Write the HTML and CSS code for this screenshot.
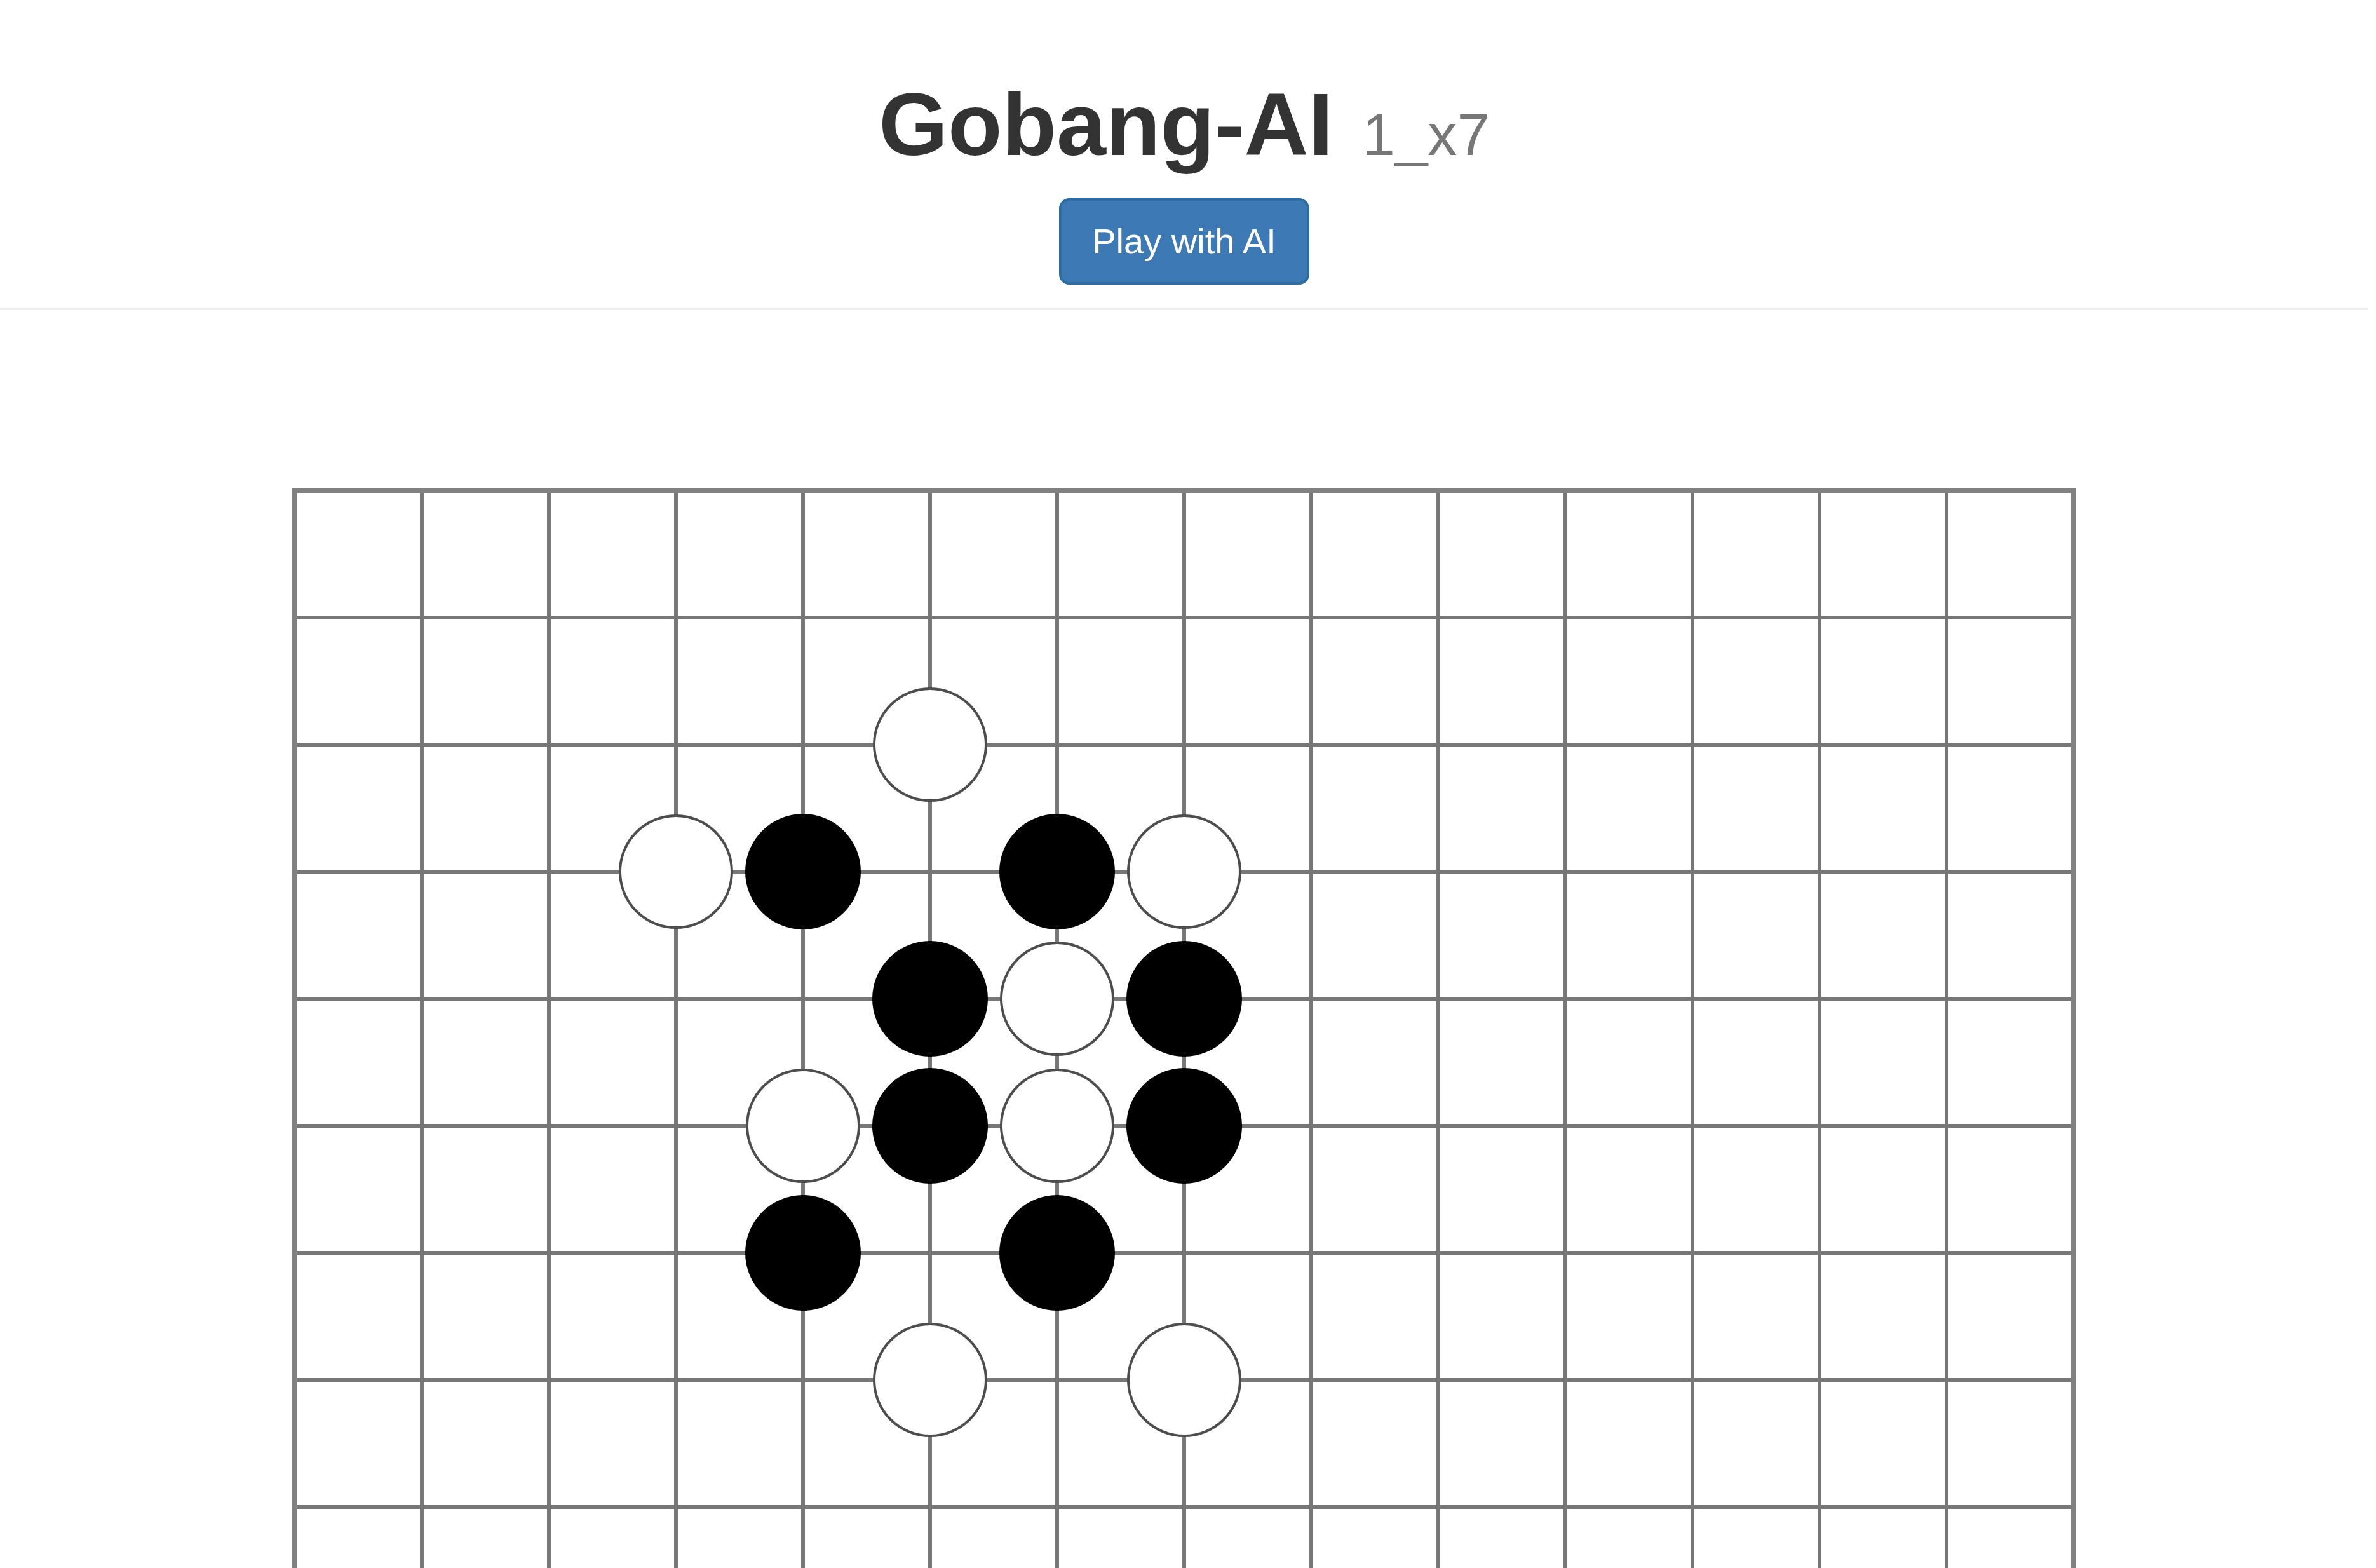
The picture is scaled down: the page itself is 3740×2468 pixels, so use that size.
FILE: index.html
```html
<!DOCTYPE html>
<html lang="en">
<head>
<meta charset="utf-8">
<title>Gobang-AI</title>
<link rel="stylesheet" href="styles.css">
</head>
<body>
<div class="page">
  <header class="page-header">
    <h1 class="title">Gobang-AI <small class="version">1_x7</small></h1>
    <button class="btn btn-primary" type="button">Play with AI</button>
  </header>
  <main class="board-wrap">
    <svg class="board" width="2808" height="2808" viewBox="-4 -4 2808 2808" xmlns="http://www.w3.org/2000/svg">
      <g class="grid">
        <line x1="200" y1="0" x2="200" y2="2800"/>
        <line x1="400" y1="0" x2="400" y2="2800"/>
        <line x1="600" y1="0" x2="600" y2="2800"/>
        <line x1="800" y1="0" x2="800" y2="2800"/>
        <line x1="1000" y1="0" x2="1000" y2="2800"/>
        <line x1="1200" y1="0" x2="1200" y2="2800"/>
        <line x1="1400" y1="0" x2="1400" y2="2800"/>
        <line x1="1600" y1="0" x2="1600" y2="2800"/>
        <line x1="1800" y1="0" x2="1800" y2="2800"/>
        <line x1="2000" y1="0" x2="2000" y2="2800"/>
        <line x1="2200" y1="0" x2="2200" y2="2800"/>
        <line x1="2400" y1="0" x2="2400" y2="2800"/>
        <line x1="2600" y1="0" x2="2600" y2="2800"/>
        <line x1="0" y1="200" x2="2800" y2="200"/>
        <line x1="0" y1="400" x2="2800" y2="400"/>
        <line x1="0" y1="600" x2="2800" y2="600"/>
        <line x1="0" y1="800" x2="2800" y2="800"/>
        <line x1="0" y1="1000" x2="2800" y2="1000"/>
        <line x1="0" y1="1200" x2="2800" y2="1200"/>
        <line x1="0" y1="1400" x2="2800" y2="1400"/>
        <line x1="0" y1="1600" x2="2800" y2="1600"/>
        <line x1="0" y1="1800" x2="2800" y2="1800"/>
        <line x1="0" y1="2000" x2="2800" y2="2000"/>
        <line x1="0" y1="2200" x2="2800" y2="2200"/>
        <line x1="0" y1="2400" x2="2800" y2="2400"/>
        <line x1="0" y1="2600" x2="2800" y2="2600"/>
        <rect class="edge" x="0" y="0" width="2800" height="2800"/>
      </g>
      <g class="stones">
        <circle class="white" cx="1000" cy="400" r="88"/>
        <circle class="white" cx="600" cy="600" r="88"/>
        <circle class="black" cx="800" cy="600" r="91"/>
        <circle class="black" cx="1200" cy="600" r="91"/>
        <circle class="white" cx="1400" cy="600" r="88"/>
        <circle class="black" cx="1000" cy="800" r="91"/>
        <circle class="white" cx="1200" cy="800" r="88"/>
        <circle class="black" cx="1400" cy="800" r="91"/>
        <circle class="white" cx="800" cy="1000" r="88"/>
        <circle class="black" cx="1000" cy="1000" r="91"/>
        <circle class="white" cx="1200" cy="1000" r="88"/>
        <circle class="black" cx="1400" cy="1000" r="91"/>
        <circle class="black" cx="800" cy="1200" r="91"/>
        <circle class="black" cx="1200" cy="1200" r="91"/>
        <circle class="white" cx="1000" cy="1400" r="88"/>
        <circle class="white" cx="1400" cy="1400" r="88"/>
      </g>
    </svg>
  </main>
</div>
</body>
</html>
```

FILE: styles.css
```css
html, body {
  margin: 0;
  padding: 0;
  background: #fff;
}

body {
  font-family: "Liberation Sans", Arial, Helvetica, sans-serif;
  font-size: 56px;
  line-height: 80px;
  color: #333;
}

.page {
  margin-right: 12px;
}

.page-header {
  display: flex;
  flex-direction: column;
  align-items: center;
  padding-top: 117px;
  padding-bottom: 36px;
  border-bottom: 4px solid #eee;
}

.title {
  margin: 0 0 37px;
  font-size: 140px;
  line-height: 158px;
  font-weight: 700;
  color: #333;
  white-space: nowrap;
}

.version {
  margin-left: 7px;
  font-size: 66%;
  font-weight: 400;
  line-height: 1;
  color: #777;
}

.btn {
  display: inline-block;
  margin: 0;
  padding: 24px 48px;
  font-family: inherit;
  font-size: 56px;
  line-height: 80px;
  border-radius: 16px;
  border: 4px solid transparent;
  cursor: pointer;
}

.btn-primary {
  background: #3d79b4;
  border-color: #2e6da4;
  color: #fff;
}

.board-wrap {
  display: flex;
  justify-content: center;
  padding-top: 280px;
}

.board {
  display: block;
  flex: none;
}

.grid line {
  stroke: #777;
  stroke-width: 6;
}

.grid .edge {
  fill: none;
  stroke: #818181;
  stroke-width: 8;
}

.stones .white {
  fill: #fff;
  stroke: #4d4d4d;
  stroke-width: 4;
}

.stones .black {
  fill: #000;
}
```
